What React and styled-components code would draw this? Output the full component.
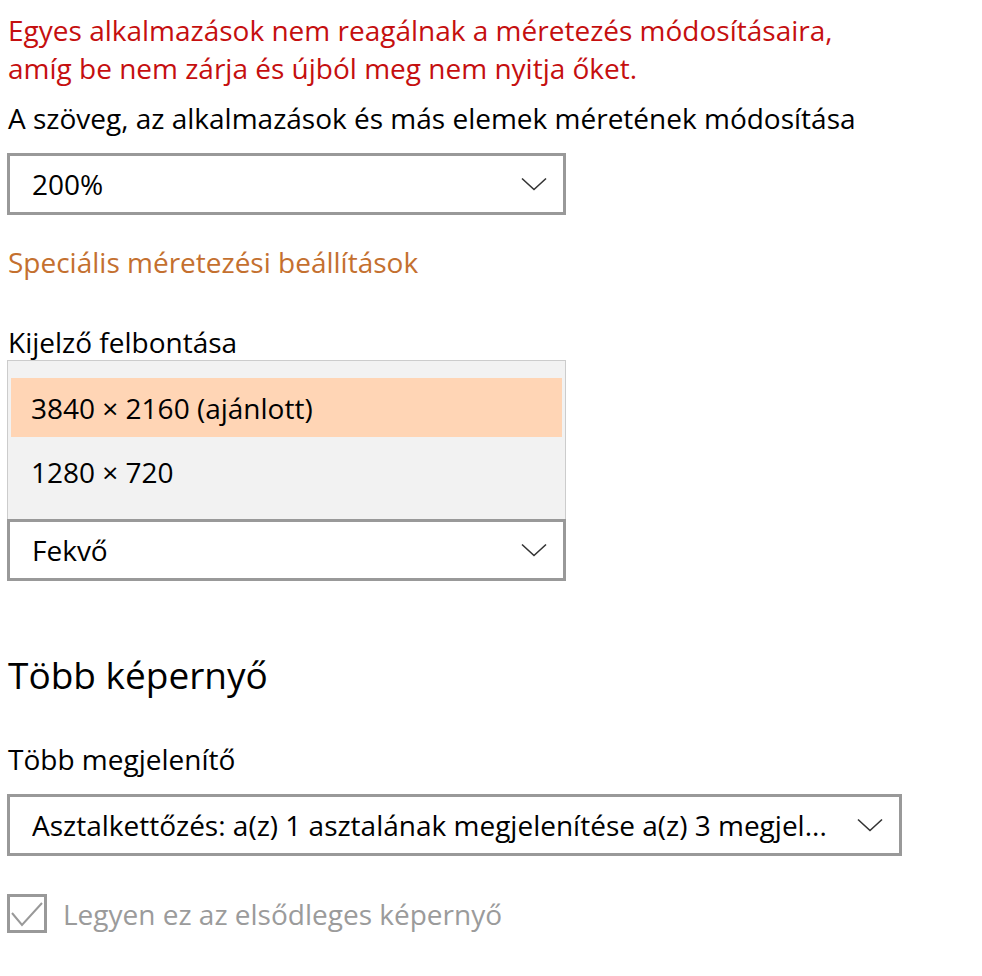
import React from "react";
import styled, { createGlobalStyle } from "styled-components";

const GlobalStyle = createGlobalStyle`
  html, body { margin: 0; padding: 0; background: #ffffff; }
  body {
    font-family: "Open Sans", "Noto Sans", sans-serif;
    color: #000;
    -webkit-font-smoothing: antialiased;
  }
`;

const Page = styled.div`
  display: flex;
  flex-direction: column;
  align-items: flex-start;
  padding: 11px 0 0 7px;
  width: 982px;
  height: 976px;
  box-sizing: border-box;
`;

const Text = styled.div`
  font-size: 28px;
  line-height: 38px;
  margin-top: ${(p) => p.$mt || 0}px;
  padding-left: 1px;
  color: ${(p) => p.$color || "#000"};
  white-space: nowrap;
`;

const Heading = styled.h2`
  margin: ${(p) => p.$mt || 0}px 0 0 0;
  padding-left: 1px;
  font-weight: 400;
  font-size: 37px;
  line-height: 52px;
  color: #000;
`;

const Combo = styled.div`
  box-sizing: border-box;
  width: ${(p) => p.$w}px;
  height: 62px;
  margin-top: ${(p) => p.$mt || 0}px;
  border: 3px solid #999999;
  background: #fff;
  display: flex;
  align-items: center;
  justify-content: space-between;
  padding: 0 16px 0 22px;
  font-size: 28px;
  color: #000;
  white-space: nowrap;
`;

const ComboValue = styled.span`
  overflow: hidden;
  text-overflow: ellipsis;
`;

const List = styled.div`
  box-sizing: border-box;
  width: 559px;
  margin-top: -1px;
  border: 1px solid #cccccc;
  border-bottom: none;
  background: #f2f2f2;
  padding: 17px 3px 18px;
  display: flex;
  flex-direction: column;
`;

const Item = styled.div`
  height: 59px;
  margin-top: ${(p) => p.$mt || 0}px;
  display: flex;
  align-items: center;
  padding-left: 20px;
  font-size: 28px;
  background: ${(p) => (p.$selected ? "#ffd5b5" : "transparent")};
`;

const CheckRow = styled.label`
  display: flex;
  align-items: center;
  gap: 16px;
  margin-top: ${(p) => p.$mt || 0}px;
  font-size: 28px;
  color: #9b9b9b;
`;

const Box = styled.span`
  box-sizing: border-box;
  width: 40px;
  height: 39px;
  border: 3px solid #999999;
  display: flex;
`;

const Chevron = () => (
  <svg width="26" height="14" viewBox="0 0 26 14" fill="none">
    <path d="M1 1.5 L13 12.5 L25 1.5" stroke="#333" strokeWidth="1.6" />
  </svg>
);

const Check = () => (
  <svg width="34" height="33" viewBox="0 0 34 33" fill="none">
    <path d="M2 16 L12 28 L32 6" stroke="#999" strokeWidth="2" />
  </svg>
);

export default function App() {
  return (
    <>
      <GlobalStyle />
      <Page>
        <Text $color="#c50f0f">
          Egyes alkalmazások nem reagálnak a méretezés módosításaira,
          <br />
          amíg be nem zárja és újból meg nem nyitja őket.
        </Text>
        <Text $mt={12}>A szöveg, az alkalmazások és más elemek méretének módosítása</Text>
        <Combo $w={559} $mt={16}>
          <ComboValue>200%</ComboValue>
          <Chevron />
        </Combo>
        <Text $mt={28} $color="#c4702f">Speciális méretezési beállítások</Text>
        <Text $mt={42}>Kijelző felbontása</Text>
        <List>
          <Item $selected>3840 × 2160 (ajánlott)</Item>
          <Item $mt={5}>1280 × 720</Item>
        </List>
        <Combo $w={559}>
          <ComboValue>Fekvő</ComboValue>
          <Chevron />
        </Combo>
        <Heading $mt={68}>Több képernyő</Heading>
        <Text $mt={39}>Több megjelenítő</Text>
        <Combo $w={895} $mt={16}>
          <ComboValue>Asztalkettőzés: a(z) 1 asztalának megjelenítése a(z) 3 megjel...</ComboValue>
          <Chevron />
        </Combo>
        <CheckRow $mt={38}>
          <Box>
            <Check />
          </Box>
          Legyen ez az elsődleges képernyő
        </CheckRow>
      </Page>
    </>
  );
}
